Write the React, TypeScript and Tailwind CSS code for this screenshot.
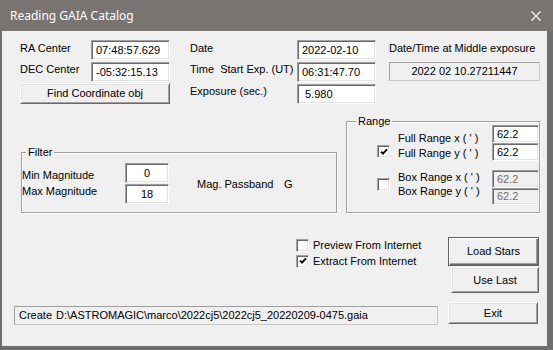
import clsx from "clsx";

function Edit({
  value,
  className,
  center,
  disabled,
}: {
  value: string;
  className?: string;
  center?: boolean;
  disabled?: boolean;
}) {
  return (
    <div
      className={clsx(
        "flex items-center whitespace-pre border border-t-[#a0a0a0] border-l-[#a0a0a0] border-b-white border-r-white text-[11px] leading-[13px] shadow-[inset_1px_1px_0_#696969,inset_-1px_-1px_0_#e3e3e3]",
        disabled ? "bg-[#f0f0f0] text-[#6d6d6d]" : "bg-white text-black",
        center ? "justify-center" : "pl-[4px]",
        className
      )}
    >
      {value}
    </div>
  );
}

function Button({ label, className, isDefault }: { label: string; className?: string; isDefault?: boolean }) {
  return (
    <button
      type="button"
      className={clsx(
        "flex items-center justify-center bg-[#f0f0f0] text-[11px] leading-[13px] text-black",
        isDefault
          ? "border border-[#646464] shadow-[inset_1px_1px_0_#ffffff,inset_-1px_-1px_0_#696969,inset_-2px_-2px_0_#a0a0a0]"
          : "border border-t-white border-l-white border-r-[#696969] border-b-[#696969] shadow-[inset_1px_1px_0_#e3e3e3,inset_-1px_-1px_0_#a0a0a0]",
        className
      )}
    >
      {label}
    </button>
  );
}

function Check({ checked, className }: { checked?: boolean; className?: string }) {
  return (
    <span
      className={clsx(
        "flex h-[13px] w-[13px] shrink-0 items-center justify-center border border-t-[#a0a0a0] border-l-[#a0a0a0] border-b-white border-r-white bg-white shadow-[inset_1px_1px_0_#696969,inset_-1px_-1px_0_#e3e3e3]",
        className
      )}
    >
      {checked && (
        <svg width="8" height="8" viewBox="0 0 8 8">
          <path d="M1 3.6 L3 5.6 L7 1.4" stroke="#000" strokeWidth="2" fill="none" />
        </svg>
      )}
    </span>
  );
}

function Group({ title, titleLeft, className, children }: { title: string; titleLeft: string; className?: string; children: React.ReactNode }) {
  return (
    <div className={clsx("relative border border-[#a0a0a0] shadow-[inset_1px_1px_0_#ffffff,1px_1px_0_#ffffff]", className)}>
      <span className={clsx("absolute top-[-7px] bg-[#f0f0f0] px-[2px] leading-[13px]", titleLeft)}>{title}</span>
      {children}
    </div>
  );
}

export default function App() {
  return (
    <div className="flex h-[350px] w-[553px] flex-col font-['Liberation_Sans',Arial,sans-serif] text-[11px] leading-[13px] text-black">
      {/* title bar */}
      <div className="flex h-[31px] shrink-0 items-center justify-between bg-[#797472] pl-[10px] pr-[12px]">
        <span className="font-['Noto_Sans',sans-serif] text-[12px] text-white">Reading GAIA Catalog</span>
        <svg width="10" height="10" viewBox="0 0 10 10">
          <path d="M0.5 0.5 L9.5 9.5 M9.5 0.5 L0.5 9.5" stroke="#fff" strokeWidth="1.1" />
        </svg>
      </div>

      <div className="flex flex-1 flex-col border-b-4 border-l-2 border-r-[6px] border-[#6e6e6e] bg-[#f0f0f0]">
        {/* coordinates / date */}
        <div className="flex items-start pl-[18px] pt-[9px]">
          <div className="flex w-[150px] flex-col">
            <div className="flex h-[20px]">
              <span className="flex-1 pt-[2px]">RA Center</span>
              <Edit value="07:48:57.629" className="h-[20px] w-[79px]" />
            </div>
            <div className="mt-[2px] flex h-[20px]">
              <span className="flex-1 pt-[1px]">DEC Center</span>
              <Edit value="-05:32:15.13" className="h-[20px] w-[79px]" />
            </div>
            <Button label="Find Coordinate obj" className="mt-[1px] h-[21px] w-full" />
          </div>

          <div className="ml-[20px] flex w-[186px] flex-col">
            <div className="flex h-[20px]">
              <span className="flex-1 pt-[2px]">Date</span>
              <Edit value="2022-02-10" className="h-[20px] w-[79px]" />
            </div>
            <div className="mt-[2px] flex h-[20px]">
              <span className="flex-1 whitespace-pre pt-[1px]">Time  Start Exp. (UT)</span>
              <Edit value="06:31:47.70" className="h-[20px] w-[79px]" />
            </div>
            <div className="mt-[2px] flex h-[20px]">
              <span className="flex-1 pt-[1px]">Exposure (sec.)</span>
              <Edit value=" 5.980" className="h-[20px] w-[79px]" />
            </div>
          </div>

          <div className="ml-[13px] flex w-[151px] flex-col">
            <span className="mt-[2px]">Date/Time at Middle exposure</span>
            <div className="mt-[7px] flex h-[19px] items-center justify-center border border-[#a0a0a0] border-b-[#c8c8c8] border-r-[#c8c8c8]">
              2022 02 10.27211447
            </div>
          </div>
        </div>

        {/* filter / range */}
        <div className="mt-[17px] flex items-start pl-[19px]">
          <Group title="Filter" titleLeft="left-[4px]" className="mt-[31px] flex h-[61px] w-[316px]">
            <div className="flex w-[103px] flex-col gap-[3px] pt-[16px]">
              <span>Min Magnitude</span>
              <span>Max Magnitude</span>
            </div>
            <div className="flex flex-col gap-[1px] pt-[10px]">
              <Edit value="0" center className="h-[20px] w-[44px]" />
              <Edit value="18" center className="h-[20px] w-[44px]" />
            </div>
            <div className="ml-[28px] flex pt-[25px]">
              <span className="w-[87px]">Mag. Passband</span>
              <span>G</span>
            </div>
          </Group>

          <Group title="Range" titleLeft="left-[9px]" className="ml-[9px] flex h-[92px] w-[194px] flex-col">
            <div className="mt-[3px] flex h-[36px]">
              <Check checked className="ml-[30px] mt-[20px]" />
              <div className="ml-[8px] flex w-[95px] flex-col pt-[6px] leading-[15px]">
                <span>Full Range x ( ' )</span>
                <span>Full Range y ( ' )</span>
              </div>
              <div className="flex w-[47px] shrink-0 flex-col">
                <Edit value="62.2" className="h-[18px] w-[47px]" />
                <Edit value="62.2" className="h-[18px] w-[47px]" />
              </div>
            </div>
            <div className="mt-[9px] flex">
              <Check className="ml-[30px] mt-[8px]" />
              <div className="ml-[8px] flex w-[95px] flex-col leading-[14px]">
                <span>Box Range x ( ' )</span>
                <span>Box Range y ( ' )</span>
              </div>
              <div className="flex w-[47px] shrink-0 flex-col">
                <Edit value="62.2" disabled className="h-[18px] w-[47px]" />
                <Edit value="62.2" disabled className="h-[17px] w-[47px]" />
              </div>
            </div>
          </Group>
        </div>

        {/* actions */}
        <div className="mt-[24px] flex items-start pl-[12px]">
          <div className="flex w-[424px] flex-col">
            <div className="ml-[282px] flex flex-col">
              <div className="flex h-[16px] items-center gap-[4px]">
                <Check />
                <span>Preview From Internet</span>
              </div>
              <div className="flex h-[16px] items-center gap-[4px]">
                <Check checked />
                <span>Extract From Internet</span>
              </div>
            </div>
            <div className="mt-[37px] flex h-[19px] items-center whitespace-pre border border-[#a0a0a0] border-b-[#c8c8c8] border-r-[#c8c8c8] pl-[4px]">
              <span>Create</span>
              <span className="ml-[4px]">{"D:\\ASTROMAGIC\\marco\\2022cj5\\2022cj5_20220209-0475.gaia"}</span>
            </div>
          </div>
          <div className="ml-[10px] flex flex-col items-start">
            <Button label="Load Stars" isDefault className="h-[29px] w-[91px]" />
            <Button label="Use Last" className="ml-[3px] mt-[1px] h-[26px] w-[88px]" />
            <Button label="Exit" className="mt-[9px] h-[22px] w-[90px]" />
          </div>
        </div>
      </div>
    </div>
  );
}
